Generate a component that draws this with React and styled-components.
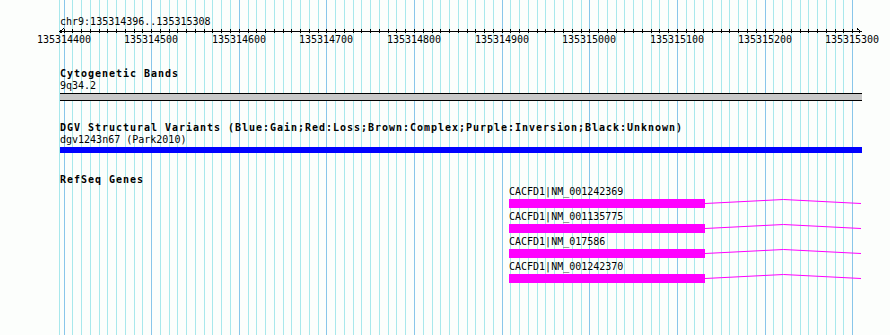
import React from 'react';
import styled, { createGlobalStyle } from 'styled-components';

const REGION_START = 135314396;
const REGION_END = 135315308;
const LEFT = 60;
const RIGHT = 862;

// genomic position -> pixel column
const px = bp => 64 + (bp - 135314400) * 0.8763;

const GlobalStyle = createGlobalStyle`
  body {
    margin: 0;
    background: #fcfefc;
  }
`;

const Panel = styled.div`
  position: relative;
  width: 890px;
  height: 335px;
  overflow: hidden;
  background: #fcfefc;
  color: #000;
  font-family: "DejaVu Sans Mono", "Liberation Mono", monospace;
  font-size: 10px;
`;

const GridSvg = styled.svg`
  position: absolute;
  left: 0;
  top: 0;
`;

const Content = styled.div`
  position: relative;
`;

const RulerBlock = styled.div`
  height: 46px;
  padding-top: 15px;
  box-sizing: border-box;
`;

const ChrLabel = styled.div`
  margin-left: ${LEFT}px;
  line-height: 13px;
  white-space: pre;
`;

const RulerSvg = styled.svg`
  display: block;
`;

const TickLabels = styled.div`
  position: relative;
  height: 13px;
  line-height: 13px;
`;

const TickLabel = styled.span`
  position: absolute;
  top: 0;
  transform: translateX(-50%);
  white-space: pre;
`;

const Track = styled.section`
  margin-top: ${props => props.$gap}px;
  padding-left: ${LEFT}px;
`;

const TrackTitle = styled.div`
  font-weight: bold;
  letter-spacing: 0.98px;
  line-height: 12px;
  white-space: pre;
`;

const TrackSub = styled.div`
  line-height: 12px;
  white-space: pre;
`;

const Band = styled.div`
  margin-top: 1px;
  width: ${RIGHT - LEFT}px;
  height: 6px;
  background: #c8c8c8;
  border-top: 1px solid #000;
  border-bottom: 1px solid #000;
`;

const VariantBar = styled.div`
  margin-top: 1px;
  width: ${RIGHT - LEFT}px;
  height: 6px;
  background: ${props => props.$color};
`;

const GeneList = styled.div`
  display: flex;
  flex-direction: column;
`;

const GeneRow = styled.div`
  margin-bottom: 3px;
`;

const GeneLabel = styled.div`
  line-height: 12px;
  white-space: pre;
`;

const GeneGlyph = styled.div`
  display: flex;
  margin-top: 1px;
  height: 9px;
`;

const Exon = styled.div`
  height: 9px;
  background: #ff00ff;
  flex: none;
`;

const Grid = () => {
  const lines = [];
  lines.push(<rect key="edge" x={59} y={0} width={1} height={335} fill="#a8e8ec" />);
  for (let k = 0; k <= 90; k++) {
    const x = Math.floor(64 + k * 8.763);
    lines.push(
      <rect key={k} x={x} y={0} width={1} height={335} fill={k % 10 === 0 ? '#88c6ea' : '#a8e8ec'} />
    );
  }
  return (
    <GridSvg width="890" height="335" shapeRendering="crispEdges">
      {lines}
    </GridSvg>
  );
};

const Ruler = () => {
  const ticks = [];
  for (let k = 0; k <= 90; k++) {
    const x = Math.floor(64 + k * 8.763) + 0.5;
    ticks.push(<line key={k} x1={x} x2={x} y1={1} y2={5} stroke="#000" />);
  }
  const labels = [];
  for (let bp = 135314400; bp <= 135315300; bp += 100) labels.push(bp);
  return (
    <RulerBlock>
      <ChrLabel>chr9:{REGION_START}..{REGION_END}</ChrLabel>
      <RulerSvg width="890" height="5" shapeRendering="crispEdges">
        <line x1={LEFT} x2={RIGHT} y1={3.5} y2={3.5} stroke="#000" />
        {ticks}
        <polyline points={`${LEFT + 4},0.5 ${LEFT},3.5 ${LEFT + 4},6.5`} fill="none" stroke="#000" />
        <polyline points={`${RIGHT - 5},0.5 ${RIGHT - 1},3.5 ${RIGHT - 5},6.5`} fill="none" stroke="#000" />
      </RulerSvg>
      <TickLabels>
        {labels.map(bp => (
          <TickLabel key={bp} style={{ left: Math.floor(px(bp)) }}>{bp}</TickLabel>
        ))}
      </TickLabels>
    </RulerBlock>
  );
};

const genes = [
  { name: 'CACFD1|NM_001242369', start: 135314908, exonEnd: 135315131 },
  { name: 'CACFD1|NM_001135775', start: 135314908, exonEnd: 135315131 },
  { name: 'CACFD1|NM_017586', start: 135314908, exonEnd: 135315131 },
  { name: 'CACFD1|NM_001242370', start: 135314908, exonEnd: 135315131 },
];

const Gene = ({ gene }) => {
  const x0 = Math.round(px(gene.start));
  const x1 = Math.round(px(gene.exonEnd));
  const intronW = RIGHT - x1;
  return (
    <GeneRow style={{ paddingLeft: x0 - LEFT }}>
      <GeneLabel>{gene.name}</GeneLabel>
      <GeneGlyph>
        <Exon style={{ width: x1 - x0 }} />
        <svg width={intronW} height="9">
          <polyline
            points={`0,4.5 ${intronW / 2},0.5 ${intronW - 1},4.5`}
            fill="none"
            stroke="#ff00ff"
            strokeWidth="1"
          />
        </svg>
      </GeneGlyph>
    </GeneRow>
  );
};

export default function App() {
  return (
    <Panel>
      <GlobalStyle />
      <Grid />
      <Content>
        <Ruler />
        <Track $gap={22}>
          <TrackTitle>Cytogenetic Bands</TrackTitle>
          <TrackSub>9q34.2</TrackSub>
          <Band />
        </Track>
        <Track $gap={21}>
          <TrackTitle>DGV Structural Variants (Blue:Gain;Red:Loss;Brown:Complex;Purple:Inversion;Black:Unknown)</TrackTitle>
          <TrackSub>dgv1243n67 (Park2010)</TrackSub>
          <VariantBar $color="#0000ff" />
        </Track>
        <Track $gap={21}>
          <TrackTitle>RefSeq Genes</TrackTitle>
          <GeneList>
            {genes.map(g => (
              <Gene key={g.name} gene={g} />
            ))}
          </GeneList>
        </Track>
      </Content>
    </Panel>
  );
}
